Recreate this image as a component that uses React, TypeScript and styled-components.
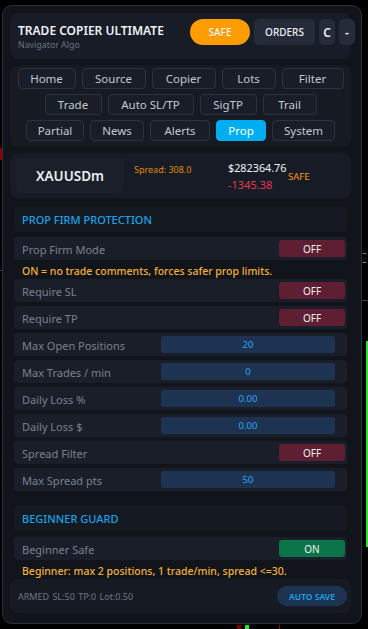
import React from 'react';
import styled, { createGlobalStyle } from 'styled-components';

const GlobalStyle = createGlobalStyle`
  html, body {
    margin: 0;
    padding: 0;
    background: #000;
  }

  body {
    font-family: 'Noto Sans', 'Open Sans', sans-serif;
    -webkit-font-smoothing: antialiased;
  }
`;

const Stage = styled.div`
  position: relative;
  width: 368px;
  height: 629px;
  overflow: hidden;
  background: #000;
`;

const ChartMark = styled.div<{ $color: string }>`
  position: absolute;
  background: ${(p) => p.$color};
`;

const Panel = styled.div`
  position: relative;
  margin: 5px 0 0 2px;
  width: 360px;
  height: 619px;
  box-sizing: border-box;
  padding: 7px 6px 0 7px;
  border: 1px solid #2a2f3a;
  border-radius: 10px;
  background: #11141b;
  display: flex;
  flex-direction: column;
`;

const Header = styled.div`
  height: 46px;
  box-sizing: border-box;
  padding: 6px 0 0 8px;
  border-radius: 8px;
  background: #181c26;
  display: flex;
  align-items: flex-start;
  margin-right: 4px;
`;

const TitleBlock = styled.div`
  flex: 1;
  padding-top: 3px;
`;

const Title = styled.div`
  color: #f1f3f6;
  font-size: 12px;
  font-weight: 600;
  line-height: 17px;
`;

const Subtitle = styled.div`
  color: #6b7382;
  font-size: 8.8px;
  line-height: 13px;
`;

const HeaderButtons = styled.div`
  display: flex;
  gap: 4px;
  margin-right: -4px;
`;

const HeaderButton = styled.div<{ $w: number; $kind?: 'safe' }>`
  width: ${(p) => p.$w}px;
  height: 26px;
  display: flex;
  align-items: center;
  justify-content: center;
  border-radius: ${(p) => (p.$kind === 'safe' ? '13px' : '5px')};
  background: ${(p) => (p.$kind === 'safe' ? '#ff9d00' : '#252b38')};
  color: #eef1f5;
  font-size: ${(p) => (p.$w < 20 ? '12px' : '10px')};
  font-weight: ${(p) => (p.$w < 20 ? 600 : 500)};
`;

const TabsCard = styled.div`
  margin-top: 6px;
  margin-right: 4px;
  height: 82px;
  box-sizing: border-box;
  padding-top: 3px;
  border-radius: 8px;
  background: #161a23;
  display: flex;
  flex-direction: column;
  gap: 5px;
`;

const TabRow = styled.div`
  display: flex;
  justify-content: center;
  gap: 6px;
`;

const Tab = styled.div<{ $w: number; $active?: boolean }>`
  width: ${(p) => p.$w}px;
  height: 21px;
  box-sizing: border-box;
  display: flex;
  align-items: center;
  justify-content: center;
  border-radius: 4px;
  border: 1px solid ${(p) => (p.$active ? '#00aef0' : '#2c3242')};
  background: ${(p) => (p.$active ? '#00aef0' : '#181d28')};
  color: ${(p) => (p.$active ? '#ffffff' : '#c3c8d1')};
  font-size: 11.5px;
`;

const SymbolCard = styled.div`
  margin-top: 6px;
  margin-right: 4px;
  height: 45px;
  box-sizing: border-box;
  padding: 5px 6px;
  border-radius: 8px;
  background: #171b25;
  display: flex;
  align-items: stretch;
`;

const SymbolBox = styled.div`
  width: 108px;
  border-radius: 6px;
  background: #1a1f2a;
  display: flex;
  align-items: center;
  justify-content: center;
  color: #eceef2;
  font-size: 13.5px;
  font-weight: 600;
`;

const SpreadText = styled.div`
  margin: 6px 0 0 10px;
  width: 94px;
  color: #e08a00;
  font-size: 9px;
  line-height: 12px;
`;

const Money = styled.div`
  display: flex;
  flex-direction: column;
  justify-content: center;
  width: 60px;
`;

const Balance = styled.div`
  color: #f1f3f6;
  font-size: 10.8px;
  line-height: 17px;
  white-space: nowrap;
`;

const Pnl = styled.div`
  color: #e33957;
  font-size: 11px;
  line-height: 17px;
`;

const SafeTag = styled.div`
  align-self: center;
  color: #f59a0c;
  font-size: 9.5px;
  padding-top: 2px;
`;

const Body = styled.div`
  margin-top: 9px;
  padding: 0 8px 0 4px;
  display: flex;
  flex-direction: column;
`;

const SectionHead = styled.div<{ $top?: number }>`
  margin-top: ${(p) => p.$top ?? 0}px;
  height: 25px;
  box-sizing: border-box;
  padding-left: 8px;
  border-radius: 4px;
  background: #151922;
  display: flex;
  align-items: center;
  color: #1ca2e6;
  font-size: 11px;
  font-weight: 500;
`;

const Row = styled.div<{ $top?: number }>`
  margin-top: ${(p) => p.$top ?? 4}px;
  height: 23px;
  box-sizing: border-box;
  padding: 0 2px 0 8px;
  border-radius: 4px;
  background: #1a1e28;
  display: flex;
  align-items: center;
`;

const Label = styled.div`
  flex: 1;
  color: #7a818e;
  font-size: 11px;
  padding-top: 2px;
`;

const Toggle = styled.div<{ $on?: boolean }>`
  width: 66px;
  height: 17px;
  border-radius: 3px;
  background: ${(p) => (p.$on ? '#0b7549' : '#5d1f31')};
  display: flex;
  align-items: center;
  justify-content: center;
  color: #eef0f3;
  font-size: 10px;
`;

const ValueBox = styled.div`
  width: 174px;
  height: 17px;
  margin-right: 10px;
  border-radius: 2px;
  background: #1e3352;
  display: flex;
  align-items: center;
  justify-content: center;
  color: #2aa7f2;
  font-size: 9.5px;
`;

const Note = styled.div`
  height: 19px;
  padding: 2px 0 0 8px;
  box-sizing: border-box;
  display: flex;
  align-items: center;
  color: #f2b33a;
  font-size: 10.5px;
  font-weight: 500;
  white-space: nowrap;
`;

const Footer = styled.div`
  margin-right: 4px;
  height: 34px;
  box-sizing: border-box;
  padding: 0 4px 0 8px;
  border-radius: 8px;
  background: #161a23;
  display: flex;
  align-items: center;
`;

const Status = styled.div`
  flex: 1;
  color: #6f7683;
  font-size: 9px;
  word-spacing: 1px;
`;

const AutoSave = styled.div`
  width: 70px;
  height: 20px;
  border-radius: 10px;
  background: #1c3352;
  display: flex;
  align-items: center;
  justify-content: center;
  color: #1ea3f0;
  font-size: 8.5px;
  font-weight: 600;
`;

const tabRows: { label: string; w: number }[][] = [
  [
    { label: 'Home', w: 58 },
    { label: 'Source', w: 64 },
    { label: 'Copier', w: 64 },
    { label: 'Lots', w: 54 },
    { label: 'Filter', w: 62 },
  ],
  [
    { label: 'Trade', w: 57 },
    { label: 'Auto SL/TP', w: 86 },
    { label: 'SigTP', w: 57 },
    { label: 'Trail', w: 54 },
  ],
  [
    { label: 'Partial', w: 58 },
    { label: 'News', w: 54 },
    { label: 'Alerts', w: 60 },
    { label: 'Prop', w: 50 },
    { label: 'System', w: 63 },
  ],
];

type Setting =
  | { label: string; toggle: boolean }
  | { label: string; value: string };

const propSettings: Setting[] = [
  { label: 'Require SL', toggle: false },
  { label: 'Require TP', toggle: false },
  { label: 'Max Open Positions', value: '20' },
  { label: 'Max Trades / min', value: '0' },
  { label: 'Daily Loss %', value: '0.00' },
  { label: 'Daily Loss $', value: '0.00' },
  { label: 'Spread Filter', toggle: false },
  { label: 'Max Spread pts', value: '50' },
];

// bits of the trading chart that peek out around the panel
const chartMarks = [
  { x: 0, y: 148, w: 2, h: 12, c: '#8a0000' },
  { x: 366, y: 341, w: 2, h: 206, c: '#2ee02e' },
  { x: 363, y: 253, w: 3, h: 1, c: '#2ec02e' },
  { x: 363, y: 262, w: 3, h: 1, c: '#2ec02e' },
  { x: 362, y: 300, w: 6, h: 1, c: '#3a3a3a' },
  { x: 0, y: 270, w: 2, h: 1, c: '#3a3a3a' },
  { x: 237, y: 625, w: 4, h: 4, c: '#7a0000' },
  { x: 245, y: 625, w: 4, h: 4, c: '#2ee82e' },
  { x: 279, y: 625, w: 1, h: 4, c: '#8a1010' },
];

const SettingRow = ({ item, top }: { item: Setting; top?: number }) => (
  <Row $top={top}>
    <Label>{item.label}</Label>
    {'toggle' in item ? (
      <Toggle $on={item.toggle}>{item.toggle ? 'ON' : 'OFF'}</Toggle>
    ) : (
      <ValueBox>{item.value}</ValueBox>
    )}
  </Row>
);

const App = () => (
  <Stage>
    <GlobalStyle />
    {chartMarks.map((m, i) => (
      <ChartMark
        key={i}
        $color={m.c}
        style={{ left: m.x, top: m.y, width: m.w, height: m.h }}
      />
    ))}

    <Panel>
      <Header>
        <TitleBlock>
          <Title>TRADE COPIER ULTIMATE</Title>
          <Subtitle>Navigator Algo</Subtitle>
        </TitleBlock>
        <HeaderButtons>
          <HeaderButton $w={60} $kind="safe">SAFE</HeaderButton>
          <HeaderButton $w={61}>ORDERS</HeaderButton>
          <HeaderButton $w={16}>C</HeaderButton>
          <HeaderButton $w={16}>-</HeaderButton>
        </HeaderButtons>
      </Header>

      <TabsCard>
        {tabRows.map((row, i) => (
          <TabRow key={i}>
            {row.map((t) => (
              <Tab key={t.label} $w={t.w} $active={t.label === 'Prop'}>
                {t.label}
              </Tab>
            ))}
          </TabRow>
        ))}
      </TabsCard>

      <SymbolCard>
        <SymbolBox>XAUUSDm</SymbolBox>
        <SpreadText>Spread: 308.0</SpreadText>
        <Money>
          <Balance>$282364.76</Balance>
          <Pnl>-1345.38</Pnl>
        </Money>
        <SafeTag>SAFE</SafeTag>
      </SymbolCard>

      <Body>
        <SectionHead>PROP FIRM PROTECTION</SectionHead>
        <Row $top={5}>
          <Label>Prop Firm Mode</Label>
          <Toggle>OFF</Toggle>
        </Row>
        <Note>ON = no trade comments, forces safer prop limits.</Note>
        {propSettings.map((s, i) => (
          <SettingRow key={s.label} item={s} top={i === 0 ? 0 : 4} />
        ))}

        <SectionHead $top={15}>BEGINNER GUARD</SectionHead>
        <Row $top={6}>
          <Label>Beginner Safe</Label>
          <Toggle $on>ON</Toggle>
        </Row>
        <Note>Beginner: max 2 positions, 1 trade/min, spread &lt;=30.</Note>
      </Body>

      <Footer>
        <Status>ARMED SL:50 TP:0 Lot:0.50</Status>
        <AutoSave>AUTO SAVE</AutoSave>
      </Footer>
    </Panel>
  </Stage>
);

export default App;
